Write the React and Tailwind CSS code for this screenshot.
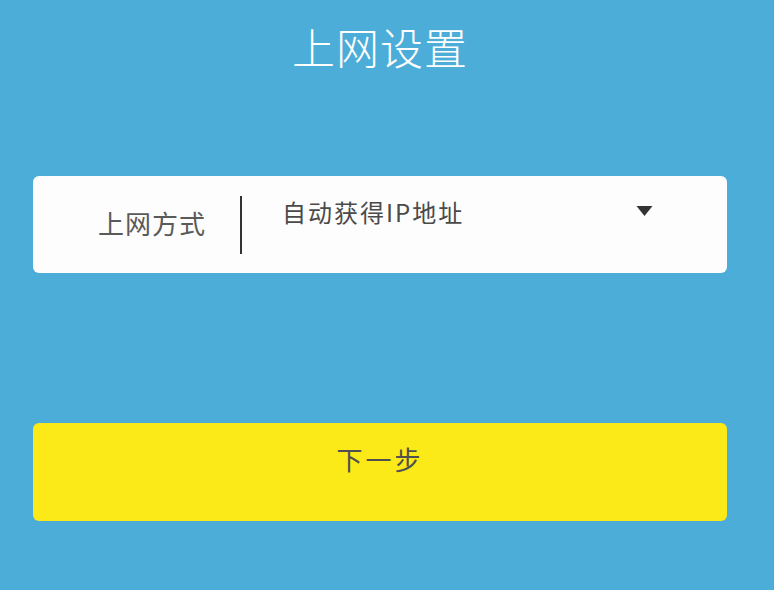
export default function App() {
    return (
        <div className="flex h-[590px] w-[774px] flex-col items-center bg-[#4badd8] pl-[33px] pr-[47px] font-['Noto_Sans_CJK_SC',sans-serif]">
            <h1 className="mt-[19px] h-[54px] text-[43px] font-light leading-[54px] tracking-[1px] text-white">上网设置</h1>

            {/* connection type selector */}
            <div className="mt-[103px] flex h-[97px] w-full items-start rounded-[6px] bg-[#fdfdfd]">
                <span className="mt-[29px] ml-[65px] w-[108px] text-[26px] leading-[36px] tracking-[1px] text-[#5a5a5a]">上网方式</span>
                <div className="mt-[20px] ml-[34px] h-[58px] w-[2px] bg-[#333]" />
                <span className="mt-[19px] ml-[40px] text-[24px] leading-[34px] tracking-[2px] text-[#4a4a4a]">自动获得IP地址</span>
                <svg className="mt-[29px] ml-auto mr-[74px]" width="17" height="12" viewBox="0 0 17 12">
                    <path d="M0.5 1 H16.5 L8.5 11 Z" fill="#333" />
                </svg>
            </div>

            <button className="mt-[150px] flex h-[98px] w-full items-center justify-center rounded-[6px] bg-[#fbea17] pb-[28px] text-[26px] tracking-[3px] text-[#505050]">
                下一步
            </button>
        </div>
    );
}
